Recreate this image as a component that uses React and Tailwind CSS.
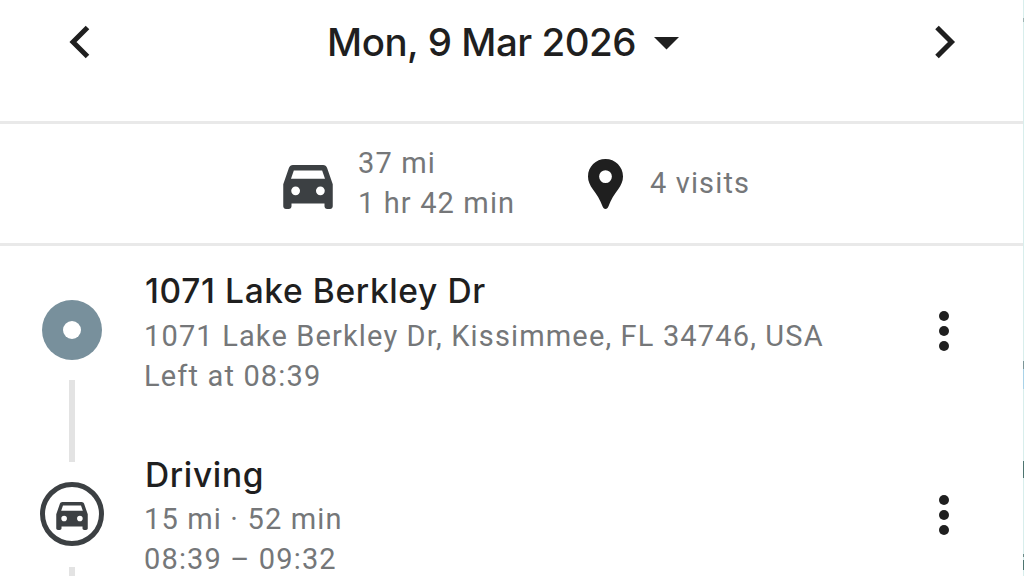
import React from "react";

function Car({ className }) {
  return (
    <svg viewBox="3 5 18 16" className={className} fill="currentColor" fillRule="evenodd" aria-hidden="true">
      <path d="M18.92 6.01C18.72 5.42 18.16 5 17.5 5h-11c-.66 0-1.21.42-1.42 1.01L3 12v8c0 .55.45 1 1 1h1c.55 0 1-.45 1-1v-1h12v1c0 .55.45 1 1 1h1c.55 0 1-.45 1-1v-8l-2.08-5.99zM7.5 16a1.6 1.6 0 1 1 0-3.200 1.6 1.6 0 0 1 0 3.200zm9 0a1.6 1.6 0 1 1 0-3.200 1.6 1.6 0 0 1 0 3.200zM5.810 10l1.04-3h10.29l1.04 3H5.81z" />
    </svg>
  );
}

function Pin() {
  return (
    <svg viewBox="0 0 35 50" className="h-[50px] w-[35px] text-[#1f1f1f]" fill="currentColor" fillRule="evenodd" aria-hidden="true">
      <path d="M17.5 0C7.8 0 0 7.7 0 17.4c0 4.700 1.900 8.600 4.800 12.800 4 5.500 7.300 10.300 9.800 17.400.6 1.600 1.500 2.400 2.900 2.400s2.300-.8 2.900-2.400c2.500-7.100 5.800-11.900 9.800-17.400 2.900-4.200 4.800-8.100 4.800-12.800C35 7.700 27.200 0 17.500 0zm0 11.200a6.400 6.400 0 1 1 0 12.800 6.400 6.400 0 0 1 0-12.800z" />
    </svg>
  );
}

function Chevron({ points }) {
  return (
    <svg viewBox="0 0 24 36" className="h-9 w-6" fill="none" stroke="#1f1f1f" strokeWidth="5" aria-hidden="true">
      <polyline points={points} />
    </svg>
  );
}

function MoreButton() {
  return (
    <button className="flex w-8 flex-col items-center gap-[5px]" aria-label="More options">
      <span className="size-[10px] rounded-full bg-[#1f1f1f]" />
      <span className="size-[10px] rounded-full bg-[#1f1f1f]" />
      <span className="size-[10px] rounded-full bg-[#1f1f1f]" />
    </button>
  );
}

function Entry({ marker, title, lines, titleClass }) {
  return (
    <li className="flex h-[184px]">
      <div className="flex w-[145px] shrink-0 flex-col items-center pr-px">{marker}</div>
      <div className="min-w-0 flex-1 whitespace-nowrap">
        <h2 className={`font-['Inter'] text-[33.500px] leading-[38px] font-medium tracking-[0.640px] text-[#1f1f1f] ${titleClass}`}>{title}</h2>
        {lines.map((line) => (
          <p key={line} className="-ml-[1px] text-[29px] leading-[40px] tracking-[1.150px]">{line}</p>
        ))}
      </div>
      <div className="flex w-[95px] shrink-0 pt-[39px]">
        <MoreButton />
      </div>
    </li>
  );
}

export default function App() {
  return (
    <div className="flex h-[576px] w-[1024px] overflow-hidden bg-white font-['Roboto',sans-serif] text-[#757779]">
      <main className="flex w-[1023px] shrink-0 flex-col">
        <header className="flex h-[124px] shrink-0 items-start border-b-[3px] border-[#e9e9e9] pr-[65px] pl-[66px] pt-6">
          <button aria-label="Previous day"><Chevron points="21.500,3.500 7,18 21.500,32.500" /></button>
          <button className="ml-[237px] flex items-center text-[#1f1f1f]">
            <span className="w-[327px] text-left font-['Inter'] text-[38.500px] leading-9 font-medium tracking-[-0.480px] whitespace-nowrap">Mon, 9 Mar 2026</span>
            <svg viewBox="0 0 25 13" className="mt-[2px] h-[13px] w-[25px]" fill="currentColor" aria-hidden="true"><path d="M0 0h25L12.500 12.500z" /></svg>
          </button>
          <button className="ml-auto" aria-label="Next day"><Chevron points="3,3.500 17.500,18 3,32.500" /></button>
        </header>

        <section className="flex h-[122px] shrink-0 items-center border-b-[3px] border-[#e9e9e9] pl-[283px] text-[29px] leading-[40px] tracking-[1.130px] whitespace-nowrap">
          <Car className="mt-[6px] h-[44px] w-[50px] text-[#3c4043]" />
          <div className="-mt-px ml-[25px] w-[230px]">
            <p>37 mi</p>
            <p>1 hr 42 min</p>
          </div>
          <Pin />
          <p className="-mt-px ml-[27px]">4 visits</p>
        </section>

        <ul className="flex flex-col pt-[26px]">
          <Entry
            titleClass="h-[44px]"
            title="1071 Lake Berkley Dr"
            lines={["1071 Lake Berkley Dr, Kissimmee, FL 34746, USA", "Left at 08:39"]}
            marker={
              <>
                <span className="mt-[28px] flex size-[60px] shrink-0 items-center justify-center rounded-full bg-[#78909c]">
                  <span className="size-[18px] rounded-full bg-white" />
                </span>
                <span className="mt-5 h-[82px] w-[6px] shrink-0 bg-[#e3e3e3]" />
              </>
            }
          />
          <Entry
            titleClass="h-[43px]"
            title="Driving"
            lines={["15 mi · 52 min", "08:39 – 09:32"]}
            marker={
              <>
                <span className="mt-[26px] flex size-[64px] shrink-0 items-center justify-center rounded-full border-[5px] border-[#3c4043] text-[#3c4043]">
                  <Car className="mt-1 h-[28px] w-[32px]" />
                </span>
                <span className="mt-[21px] h-[82px] w-[6px] shrink-0 bg-[#e3e3e3]" />
              </>
            }
          />
        </ul>
      </main>
      <div className="flex w-px flex-col bg-[#d8eeec]">
        <span className="mt-[18px] h-1 bg-[#9fb5b4]" />
        <span className="mt-[339px] h-2 bg-[#7b9698]" />
        <span className="h-5 bg-[#a9d3e8]" />
        <span className="mt-[72px] h-[17px] bg-[#4d7570]" />
        <span className="mt-[76px] h-[3px] bg-[#6b8b87]" />
        <span className="mt-[3px] h-[10px] bg-[#4d7570]" />
      </div>
    </div>
  );
}
